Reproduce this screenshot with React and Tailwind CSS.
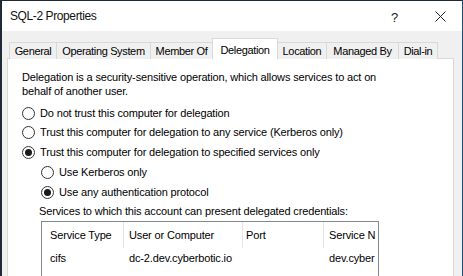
import React from "react";

const tabs = [
  { name: "General", w: "w-[48px]" },
  { name: "Operating System", w: "w-[95px]" },
  { name: "Member Of", w: "w-[63px]" },
  { name: "Delegation", w: "w-[66px]", active: true },
  { name: "Location", w: "w-[50px]" },
  { name: "Managed By", w: "w-[73px]" },
  { name: "Dial-in", w: "w-[40px]" },
];

function Radio({ checked, label, className = "" }) {
  return (
    <div className={`flex items-center ${className}`}>
      <span className="w-[13px] h-[13px] rounded-full border border-[#333] bg-white flex items-center justify-center shrink-0">
        {checked && <span className="w-[7px] h-[7px] rounded-full bg-[#1a1a1a]" />}
      </span>
      <span className="ml-[5px]">{label}</span>
    </div>
  );
}

export default function App() {
  return (
    <div
      className="w-[463px] h-[276px] overflow-hidden bg-[#f0f0f0] border-l-2 border-t border-r border-l-[#1e2a36] border-t-[#1e2a36] border-r-[#1b4f78] text-[11px] tracking-[-0.15px] text-black"
      style={{ fontFamily: '"Liberation Sans", Arial, sans-serif' }}
    >
      {/* title bar */}
      <div className="h-[30px] bg-white flex items-center pl-[8px] relative">
        <span className="text-[12px] tracking-[-0.4px] text-[#111]">SQL-2 Properties</span>
        <span className="absolute left-[389px] top-[7px] text-[13px] text-[#222]">?</span>
        <svg className="absolute left-[433px] top-[10px]" width="11" height="11" viewBox="0 0 11 11">
          <path d="M0.5 0.5 L10.5 10.5 M10.5 0.5 L0.5 10.5" stroke="#222" strokeWidth="1" />
        </svg>
      </div>

      {/* tabs */}
      <div className="pl-[5px] pr-[8px] pt-[7px]">
        <div className="flex items-end h-[21px] pl-[2px] relative z-10 tracking-[-0.35px]">
          {tabs.map((t) =>
            t.active ? (
              <div
                key={t.name}
                className={`${t.w} h-[21px] bg-white border border-b-0 border-[#d9d9d9] flex items-start justify-center pt-[3px] -ml-px`}
              >
                {t.name}
              </div>
            ) : (
              <div
                key={t.name}
                className={`${t.w} h-[17px] bg-[#f0f0f0] border border-b-0 border-[#d9d9d9] flex items-center justify-center -ml-px first:ml-0`}
              >
                {t.name}
              </div>
            )
          )}
        </div>

        {/* panel */}
        <div className="bg-white border border-[#d9d9d9] h-[260px] -mt-px pl-[14px]">
          <div className="pt-[11px] leading-[14px]">
            Delegation is a security-sensitive operation, which allows services to act on
            <br />
            behalf of another user.
          </div>
          <Radio className="mt-[5px] h-[20px]" label="Do not trust this computer for delegation" />
          <Radio className="h-[18px]" label="Trust this computer for delegation to any service (Kerberos only)" />
          <Radio className="h-[22px]" checked label="Trust this computer for delegation to specified services only" />
          <div className="pl-[19px]">
            <Radio className="h-[19px]" label="Use Kerberos only" />
            <Radio className="h-[20px]" checked label="Use any authentication protocol" />
          </div>
          <div className="pl-[17px] h-[19px] flex items-center">
            Services to which this account can present delegated credentials:
          </div>
          <div className="ml-[19px] w-[338px] h-[80px] border border-[#828790] border-b-0 overflow-hidden">
            <div className="flex h-[26px] items-center whitespace-nowrap">
              <div className="w-[81px] pl-[8px]">Service Type</div>
              <div className="w-px h-full bg-[#e5e5e5]" />
              <div className="w-[118px] pl-[5px]">User or Computer</div>
              <div className="w-px h-full bg-[#e5e5e5]" />
              <div className="w-[80px] pl-[3px]">Port</div>
              <div className="w-px h-full bg-[#e5e5e5]" />
              <div className="pl-[5px]">Service N</div>
            </div>
            <div className="flex h-[20px] items-center whitespace-nowrap">
              <div className="w-[82px] pl-[8px]">cifs</div>
              <div className="w-[119px] pl-[5px]">dc-2.dev.cyberbotic.io</div>
              <div className="w-[81px] pl-[3px]"></div>
              <div className="pl-[5px]">dev.cyber</div>
            </div>
          </div>
        </div>
      </div>
    </div>
  );
}
